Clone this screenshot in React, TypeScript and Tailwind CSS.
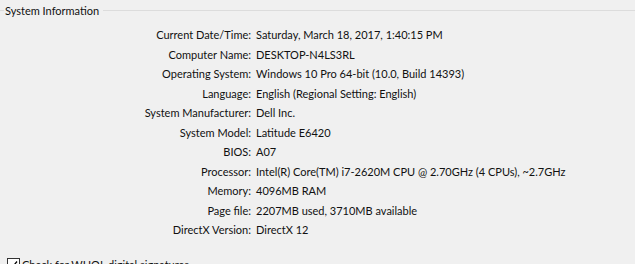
import React from 'react';

const rows: [string, string][] = [
  ['Current Date/Time:', 'Saturday, March 18, 2017, 1:40:15 PM'],
  ['Computer Name:', 'DESKTOP-N4LS3RL'],
  ['Operating System:', 'Windows 10 Pro 64-bit (10.0, Build 14393)'],
  ['Language:', 'English (Regional Setting: English)'],
  ['System Manufacturer:', 'Dell Inc.'],
  ['System Model:', 'Latitude E6420'],
  ['BIOS:', 'A07'],
  ['Processor:', 'Intel(R) Core(TM) i7-2620M CPU @ 2.70GHz (4 CPUs), ~2.7GHz'],
  ['Memory:', '4096MB RAM'],
  ['Page file:', '2207MB used, 3710MB available'],
  ['DirectX Version:', 'DirectX 12'],
];

export default function App() {
  return (
    <div className="w-[635px] h-[264px] overflow-hidden bg-[#f0f0f0] text-[11px] text-[#111] font-['Lato',sans-serif]">
      {/* Group box header */}
      <div className="flex items-center h-[21px]">
        <div className="w-[4px] h-px bg-[#dcdcdc]" />
        <span className="px-[1px] leading-none">System Information</span>
        <div className="flex-1 h-px bg-[#dcdcdc] ml-[3px]" />
      </div>

      {/* Info rows */}
      <div className="mt-[4.5px] grid grid-cols-[251px_1fr]">
        {rows.map(([label, value]) => (
          <React.Fragment key={label}>
            <div className="h-[19.5px] flex items-center justify-end">{label}</div>
            <div className="h-[19.5px] flex items-center pl-[5px] whitespace-nowrap">{value}</div>
          </React.Fragment>
        ))}
      </div>

      {/* WHQL checkbox */}
      <div className="mt-[17.5px] ml-[7px] flex items-start gap-[2px]">
        <div className="w-[13px] h-[13px] border border-[#333] bg-white flex items-center justify-center">
          <svg width="9" height="9" viewBox="0 0 9 9">
            <path d="M1 4.5 L3.5 7 L8 1.5" fill="none" stroke="#000" strokeWidth="1.3" />
          </svg>
        </div>
        <span className="leading-[13px]">Check for WHQL digital signatures</span>
      </div>
    </div>
  );
}
